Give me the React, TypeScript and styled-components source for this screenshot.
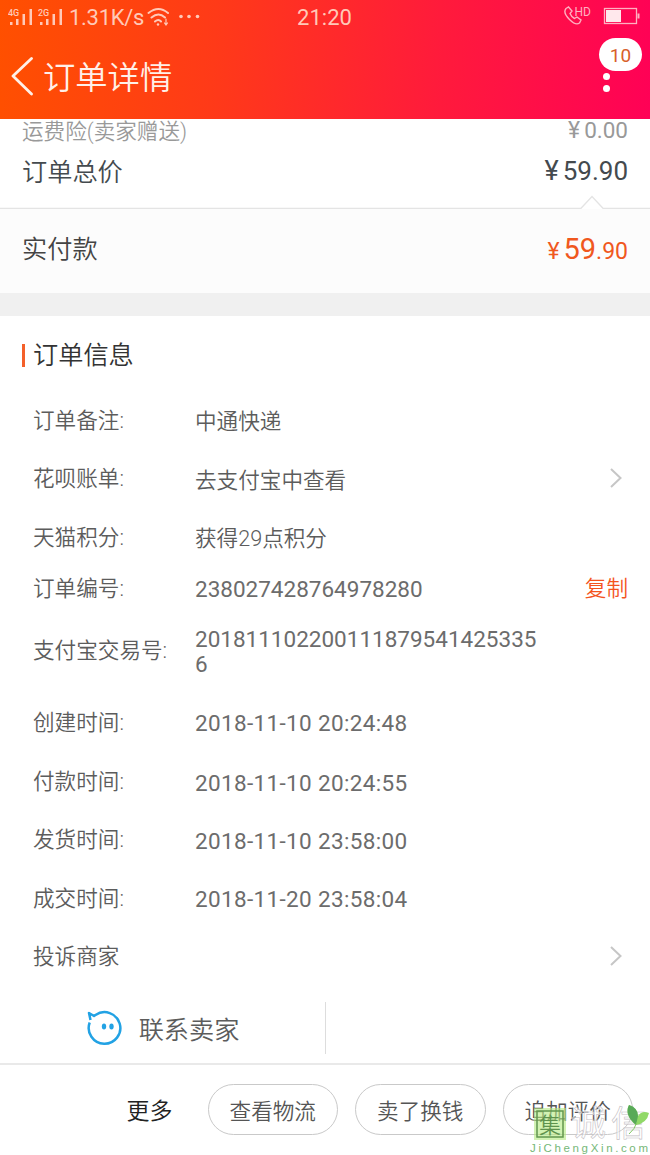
import React from "react";
import styled, { createGlobalStyle } from "styled-components";

const GlobalStyle = createGlobalStyle`
  * { box-sizing: border-box; }
  body { margin: 0; background: #fff; font-family: Roboto, "Noto Sans CJK SC", sans-serif; color: #666; }
`;

const Screen = styled.div`
  width: 650px;
  height: 1155px;
  display: flex;
  flex-direction: column;
  position: relative;
  overflow: hidden;
  white-space: nowrap;
  background: #fff;
`;

const Header = styled.header`
  height: 119px;
  flex: none;
  background: linear-gradient(94deg, #ff5000 0%, #ff3a18 33%, #ff1a3c 68%, #ff0156 100%);
  color: #ffe9e0;
`;

const StatusBar = styled.div`
  height: 34px;
  display: grid;
  grid-template-columns: 1fr auto 1fr;
  align-items: center;
  padding: 0 10px 0 8px;
  color: #ffc9b8;
`;

const StatusGroup = styled.div<{ $end?: boolean }>`
  display: flex;
  align-items: center;
  justify-content: ${(p) => (p.$end ? "flex-end" : "flex-start")};
  svg { display: block; flex: none; }
`;

const Speed = styled.span`
  font-size: 22px;
  line-height: 32px;
  padding-top: 2px;
  letter-spacing: -0.3px;
  margin-left: 4px;
  margin-right: 3px;
`;

const Clock = styled.span`
  font-size: 22px;
  line-height: 32px;
  padding: 2px 0 0 1px;
`;

const NavBar = styled.div`
  height: 85px;
  display: flex;
  align-items: center;
  padding: 0 8px 0 11px;
`;

const Title = styled.h1`
  margin: 3px 0 0 9px;
  font-size: 32.3px;
  line-height: 48px;
  font-weight: 350;
  flex: 1;
  color: #fff0e8;
`;

const MenuButton = styled.div`
  width: 43px;
  height: 77px;
  align-self: flex-start;
  display: flex;
  flex-direction: column;
  padding-top: 4px;
`;

const Badge = styled.span`
  width: 43px;
  height: 33px;
  border-radius: 17px;
  background: #fff;
  color: #d8602a;
  font-size: 19px;
  line-height: 35px;
  text-align: center;
`;

const Dots = styled.span`
  display: flex;
  flex-direction: column;
  gap: 5px;
  padding: 2px 0 0 4px;
  i { width: 7px; height: 7px; border-radius: 50%; background: #fff; }
`;

const Totals = styled.section`
  height: 90px;
  flex: none;
  display: flex;
  flex-direction: column;
`;

const TotalRow = styled.div<{ $muted?: boolean }>`
  height: ${(p) => (p.$muted ? 25 : 51)}px;
  flex: none;
  padding: 0 22px;
  display: flex;
  justify-content: space-between;
  align-items: center;
  font-size: ${(p) => (p.$muted ? 21.6 : 25.2)}px;
  line-height: 28px;
  color: ${(p) => (p.$muted ? "#999" : "#444a4e")};
`;

const Name = styled.span<{ $top?: number; $bottom?: number }>`
  font-weight: 350;
  padding-top: ${(p) => p.$top || 0}px;
  padding-bottom: ${(p) => p.$bottom || 0}px;
`;

const Amount = styled.span<{ $top?: number; $bottom?: number; $size: number }>`
  display: flex;
  align-items: baseline;
  gap: 4px;
  font-size: ${(p) => p.$size}px;
  padding-top: ${(p) => p.$top || 0}px;
  padding-bottom: ${(p) => p.$bottom || 0}px;
`;

const Yen = styled.span<{ $size: number }>`
  font-size: ${(p) => p.$size}px;
`;

const Divider = styled.svg`
  display: block;
  flex: none;
`;

const Paid = styled.section`
  height: 84px;
  flex: none;
  padding: 0 22px;
  display: flex;
  justify-content: space-between;
  align-items: center;
  font-size: 25.2px;
  background: #fcfcfc;
  color: #444;
`;

const PaidAmount = styled(Amount)`
  color: #f0581e;
`;

const Big = styled.span`
  font-size: 29px;
  small { font-size: 23px; }
`;

const Gap = styled.div`
  height: 23px;
  flex: none;
  background: #f0f0f0;
`;

const SectionTitle = styled.h2`
  margin: 0;
  height: 75px;
  flex: none;
  padding: 3px 0 0 22px;
  display: flex;
  align-items: center;
  gap: 8px;
  font-size: 25.2px;
  line-height: 36px;
  font-weight: 350;
  color: #333;
  span { padding-top: 2px; }
  &::before { content: ""; width: 3px; height: 23px; background: #f4602a; }
`;

const InfoRow = styled.div<{ $h: number }>`
  height: ${(p) => p.$h}px;
  flex: none;
  padding: 0 22px 0 33px;
  display: grid;
  grid-template-columns: 162px 1fr auto;
  align-items: center;
  font-size: 21.6px;
  line-height: 25px;
  color: #5c5c5c;
`;

const Value = styled.span<{ $num?: boolean; $spacing?: number }>`
  font-size: ${(p) => (p.$num ? 22.5 : 21.6)}px;
  letter-spacing: ${(p) => p.$spacing || 0}px;
  width: 346px;
  font-weight: ${(p) => (p.$num ? 400 : 350)};
  color: ${(p) => (p.$num ? "#6c6c6c" : "#5c5c5c")};
  overflow-wrap: anywhere;
  white-space: normal;
  padding-top: 3px;
`;

const Label = styled.span`
  font-weight: 350;
`;

const Copy = styled.span`
  font-weight: 350;
  color: #f4541e;
  padding-top: 1px;
`;

const Chevron = styled.svg`
  margin-right: 5px;
`;

const Contact = styled.div`
  height: 77px;
  flex: none;
  padding: 16px 0 9px;
  display: flex;
`;

const ContactHalf = styled.div`
  width: 326px;
  border-right: 1px solid #ddd;
  display: flex;
  align-items: center;
  justify-content: center;
  gap: 17px;
  font-size: 25.2px;
  font-weight: 350;
  color: #5c5c5c;
`;

const Footer = styled.footer`
  flex: 1;
  border-top: 2px solid #e9e9e9;
  display: flex;
  align-items: flex-start;
  justify-content: flex-end;
  gap: 17px;
  padding: 19px 17px 0 0;
`;

const More = styled.span`
  font-size: 23px;
  font-weight: 350;
  line-height: 55px;
  margin-right: 18px;
  color: #222;
`;

const Pill = styled.button`
  width: 130.5px;
  height: 51px;
  padding: 0;
  border: 1px solid #c9c9c9;
  border-radius: 26px;
  background: #fff;
  color: #555;
  font: 350 21.6px Roboto, "Noto Sans CJK SC", sans-serif;
`;

const Watermark = styled.svg`
  position: absolute;
  right: 0;
  bottom: 0;
`;

const Signal = ({ label }: { label: string }) => (
  <svg width="27" height="22" viewBox="0 0 27 22" fill="#ffc9b8">
    <text x="0" y="9.500" fontSize="9" fontWeight="500" fontFamily="Roboto, sans-serif">{label}</text>
    <rect x="2" y="16" width="2.5" height="3" />
    <rect x="8" y="13" width="2.5" height="6" />
    <rect x="14.500" y="8" width="2.5" height="11" />
    <rect x="21.500" y="3" width="2.5" height="16" />
  </svg>
);

const Arrow = () => (
  <Chevron width="14" height="22" viewBox="0 0 14 22" fill="none" stroke="#c6c6c6" strokeWidth="2">
    <path d="M2 1l9.500 9L2 19" />
  </Chevron>
);

type Row = { label: string; value?: string; h: number; num?: boolean; spacing?: number; arrow?: boolean; copy?: boolean };

const rows: Row[] = [
  { label: "订单备注:", value: "中通快递", h: 58 },
  { label: "花呗账单:", value: "去支付宝中查看", h: 59, arrow: true },
  { label: "天猫积分:", value: "获得29点积分", h: 58 },
  { label: "订单编号:", value: "238027428764978280", h: 44, num: true, copy: true },
  { label: "支付宝交易号:", value: "2018111022001118795414253356", h: 81, num: true },
  { label: "创建时间:", value: "2018-11-10 20:24:48", h: 62, num: true, spacing: 0.35 },
  { label: "付款时间:", value: "2018-11-10 20:24:55", h: 57, num: true, spacing: 0.35 },
  { label: "发货时间:", value: "2018-11-10 23:58:00", h: 59, num: true, spacing: 0.35 },
  { label: "成交时间:", value: "2018-11-20 23:58:04", h: 58, num: true, spacing: 0.35 },
  { label: "投诉商家", h: 59, arrow: true },
];

export default function App() {
  return (
    <Screen>
      <GlobalStyle />
      <Header>
        <StatusBar>
          <StatusGroup>
            <Signal label="4G" />
            <svg width="3" height="1" />
            <Signal label="2G" />
            <Speed>1.31K/s</Speed>
            <svg width="56" height="20" viewBox="0 0 56 20" fill="none" stroke="#ffc9b8" strokeWidth="2" strokeLinecap="round">
              <path d="M1.500 6Q11.500-2 21 6M4.500 10.500Q11.500 4.500 18 10.500M8 14.500Q11.500 11.500 14 14.500" />
              <circle cx="11" cy="17.500" r="1.200" fill="#ffc9b8" stroke="none" />
              <path d="M19 12v6M17.500 16l1.500 2l1.500-2" strokeWidth="1.200" />
              <g fill="#ffc9b8" stroke="none">
                <circle cx="34" cy="9.500" r="1.800" />
                <circle cx="42" cy="9.500" r="1.800" />
                <circle cx="50.500" cy="9.500" r="1.800" />
              </g>
            </svg>
          </StatusGroup>
          <Clock>21:20</Clock>
          <StatusGroup $end>
            <svg width="78" height="24" viewBox="0 0 78 24" fill="none" stroke="#ffb0c0" strokeWidth="1.400">
              <path d="M4 3.500L6.500 2l3.500 4-2 2.500c1 2.500 2.500 4 4.500 5l2.500-1.500 4 3-1.500 3c-2.500 2-6 .5-10-3.500S1.500 6.500 4 3.500Z" />
              <text x="12.500" y="10.500" fontSize="12" fill="#ffb0c0" stroke="none" fontFamily="Roboto, sans-serif">HD</text>
              <rect x="42.500" y="3.500" width="32" height="15" strokeWidth="1.300" />
              <rect x="44" y="5" width="15" height="12" fill="#ffe8ec" stroke="none" />
              <path d="M76.500 8.500v5" strokeWidth="2" />
            </svg>
          </StatusGroup>
        </StatusBar>
        <NavBar>
          <svg width="23" height="40" viewBox="0 0 23 40" fill="none" stroke="#fff0e8" strokeWidth="2.800" strokeLinecap="round" strokeLinejoin="round">
            <path d="M20.500 1.500L2 19l18.500 18" />
          </svg>
          <Title>订单详情</Title>
          <MenuButton>
            <Badge>10</Badge>
            <Dots><i /><i /></Dots>
          </MenuButton>
        </NavBar>
      </Header>

      <Totals>
        <TotalRow $muted>
          <Name $top={1}>运费险(卖家赠送)</Name>
          <Amount $size={22.5} $bottom={3}><Yen $size={23}>¥</Yen>0.00</Amount>
        </TotalRow>
        <TotalRow>
          <Name $top={6}>订单总价</Name>
          <Amount $size={26} $top={2}><Yen $size={27}>¥</Yen>59.90</Amount>
        </TotalRow>
        <Divider width="650" height="14" viewBox="0 0 650 14" fill="none" stroke="#e4e4e4" strokeWidth="1.300">
          <path d="M0 13.300H581L592 1.500L603 13.300H650" />
        </Divider>
      </Totals>

      <Paid>
        <Name $bottom={9}>实付款</Name>
        <PaidAmount $size={29} $bottom={4}><Yen $size={23}>¥</Yen><Big>59<small>.90</small></Big></PaidAmount>
      </Paid>
      <Gap />

      <SectionTitle><span>订单信息</span></SectionTitle>
      {rows.map((r) => (
        <InfoRow key={r.label} $h={r.h}>
          <Label>{r.label}</Label>
          <Value $num={r.num} $spacing={r.spacing}>{r.value}</Value>
          {r.arrow && <Arrow />}
          {r.copy && <Copy>复制</Copy>}
        </InfoRow>
      ))}

      <Contact>
        <ContactHalf>
          <svg width="36" height="36" viewBox="0 0 36 36" fill="none" stroke="#22a2e4" strokeWidth="2.500" strokeLinejoin="round">
            <path d="M3.700 12.500A15.800 15.800 0 1 0 9.500 5L8 6L3 3L4.500 10" />
            <ellipse cx="18" cy="16.500" rx="2.200" ry="3" fill="#22a2e4" stroke="none" />
            <ellipse cx="25.500" cy="16.500" rx="2.200" ry="3" fill="#22a2e4" stroke="none" />
          </svg>
          <span>联系卖家</span>
        </ContactHalf>
      </Contact>

      <Footer>
        <More>更多</More>
        <Pill>查看物流</Pill>
        <Pill>卖了换钱</Pill>
        <Pill>追加评价</Pill>
      </Footer>

      <Watermark width="122" height="56" viewBox="0 -6 122 56" fontFamily="'Noto Sans CJK SC', sans-serif">
        <rect x="6" y="3" width="32" height="32" fill="#b4ea80" fillOpacity="0.6" />
        <rect x="9" y="6" width="26" height="26" fill="none" stroke="#62964f" strokeWidth="1.500" />
        <text x="11" y="27.500" fontSize="22" fontWeight="350" fill="#5e924d">集</text>
        <g fill="#fff" fillOpacity="0.6" stroke="#c5c0c5" strokeWidth="0.600">
          <text x="43" y="31" fontSize="35">诚</text>
          <text x="83" y="31" fontSize="35">信</text>
        </g>
        <path d="M108 20Q96 10 101 0Q110 3 110 11Q114 5 121 8Q119 18 108 20Z" fill="#91d968" />
        <path d="M108 20Q96 10 101 0Q110 3 110 11Z" fill="#58a958" />
        <path d="M109 17Q107 24 101 29" fill="none" stroke="#82c764" />
        <text x="2" y="47" fontSize="11.500" textLength="118" fill="#76b878" fontFamily="'Liberation Sans', sans-serif">JiChengXin.com</text>
      </Watermark>
    </Screen>
  );
}
